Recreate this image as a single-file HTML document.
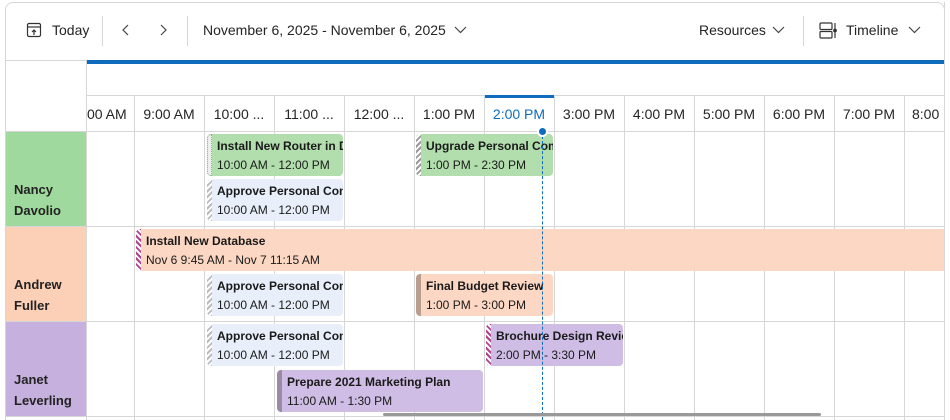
<!DOCTYPE html><html><head><style>
*{box-sizing:border-box;margin:0;padding:0}
body{width:950px;height:420px;background:#fff;font-family:"Liberation Sans",sans-serif;color:#242424;position:relative;overflow:hidden}
.abs{position:absolute}
.frame{left:5px;top:2px;width:940px;height:418px;border:1px solid #d6d6d6;border-radius:8px 8px 0 0;border-bottom:none}
.tb{font-size:14px;top:22px}
.sep{width:1px;height:30px;background:#d6d6d6;top:16px}
.vl{width:1px;background:#d6d6d6}
.hl{height:1px;background:#d6d6d6}
.th{top:106px;font-size:14px;width:70px;text-align:center}
.res{left:6px;width:80px;font-size:13px;font-weight:bold;padding-left:8px;line-height:21px;color:#222}
.ev{border-radius:4px;padding:5px 0 0 10px;font-size:12px;line-height:20px;overflow:hidden;white-space:nowrap;color:#1a1a1a}
.ev b{display:block;line-height:14px;margin-bottom:2px}
.bar{position:absolute;left:0;top:0;bottom:0;width:5px;border-radius:4px 0 0 4px}
</style></head><body>
<div class="abs frame"></div>
<svg class="abs" style="left:26px;top:22px" width="16" height="16" viewBox="0 0 16 16" fill="none" stroke="#333" stroke-width="1.2"><rect x="1.5" y="1.5" width="13" height="13" rx="1.5"/><line x1="1.5" y1="5" x2="14.5" y2="5"/><path d="M8 8v5M6 10l2-2 2 2"/></svg>
<div class="abs tb" style="left:52px">Today</div>
<div class="abs sep" style="left:102px"></div>
<svg class="abs" style="left:120px;top:24px" width="12" height="12" viewBox="0 0 12 12" fill="none" stroke="#444" stroke-width="1.2"><path d="M8 1L3 6l5 5"/></svg>
<svg class="abs" style="left:157px;top:24px" width="12" height="12" viewBox="0 0 12 12" fill="none" stroke="#444" stroke-width="1.2"><path d="M4 1l5 5-5 5"/></svg>
<div class="abs sep" style="left:187px"></div>
<div class="abs tb" style="left:203px">November 6, 2025 - November 6, 2025</div>
<svg class="abs" style="left:454px;top:26px" width="13" height="9" viewBox="0 0 13 9" fill="none" stroke="#444" stroke-width="1.2"><path d="M1 1l5.5 5.5L12 1"/></svg>
<div class="abs tb" style="left:699px">Resources</div>
<svg class="abs" style="left:772px;top:26px" width="13" height="9" viewBox="0 0 13 9" fill="none" stroke="#444" stroke-width="1.2"><path d="M1 1l5.5 5.5L12 1"/></svg>
<div class="abs sep" style="left:803px"></div>
<svg class="abs" style="left:819px;top:22px" width="18" height="17" viewBox="0 0 18 17" fill="none" stroke="#333" stroke-width="1.2"><rect x="1" y="1" width="12" height="6.5" rx="1"/><rect x="1" y="9.5" width="12" height="6.5" rx="1"/><line x1="16" y1="1" x2="16" y2="16"/><circle cx="16" cy="8.5" r="1.3" fill="#333"/></svg>
<div class="abs tb" style="left:846px">Timeline</div>
<svg class="abs" style="left:908px;top:26px" width="13" height="9" viewBox="0 0 13 9" fill="none" stroke="#444" stroke-width="1.2"><path d="M1 1l5.5 5.5L12 1"/></svg>

<div class="abs hl" style="left:6px;top:60px;width:938px"></div>
<div class="abs" style="left:86px;top:60px;width:858px;height:4px;background:#0f6cbd"></div>
<div class="abs hl" style="left:86px;top:95px;width:858px"></div>
<div class="abs hl" style="left:6px;top:131px;width:938px"></div>
<div class="abs hl" style="left:6px;top:226px;width:938px"></div>
<div class="abs hl" style="left:6px;top:321px;width:938px"></div>
<div class="abs hl" style="left:6px;top:416px;width:938px"></div>
<div class="abs vl" style="left:86px;top:60px;height:360px"></div>
<div class="abs vl" style="left:134px;top:95px;height:325px"></div>
<div class="abs vl" style="left:204px;top:95px;height:325px"></div>
<div class="abs vl" style="left:274px;top:95px;height:325px"></div>
<div class="abs vl" style="left:344px;top:95px;height:325px"></div>
<div class="abs vl" style="left:414px;top:95px;height:325px"></div>
<div class="abs vl" style="left:484px;top:95px;height:325px"></div>
<div class="abs vl" style="left:554px;top:95px;height:325px"></div>
<div class="abs vl" style="left:624px;top:95px;height:325px"></div>
<div class="abs vl" style="left:694px;top:95px;height:325px"></div>
<div class="abs vl" style="left:764px;top:95px;height:325px"></div>
<div class="abs vl" style="left:834px;top:95px;height:325px"></div>
<div class="abs vl" style="left:904px;top:95px;height:325px"></div>

<div class="abs" style="left:87px;top:96px;width:47px;height:35px;overflow:hidden"><div class="abs th" style="left:-21px;top:10px">8:00 AM</div></div>
<div class="abs th" style="left:134px">9:00 AM</div>
<div class="abs th" style="left:204px">10:00 ...</div>
<div class="abs th" style="left:274px">11:00 ...</div>
<div class="abs th" style="left:344px">12:00 ...</div>
<div class="abs th" style="left:414px">1:00 PM</div>
<div class="abs" style="left:485px;top:95px;width:69px;height:3px;background:#0f6cbd"></div>
<div class="abs th" style="left:484px;color:#0f6cbd">2:00 PM</div>
<div class="abs th" style="left:554px">3:00 PM</div>
<div class="abs th" style="left:624px">4:00 PM</div>
<div class="abs th" style="left:694px">5:00 PM</div>
<div class="abs th" style="left:764px">6:00 PM</div>
<div class="abs th" style="left:834px">7:00 PM</div>
<div class="abs th" style="left:904px;text-align:left;padding-left:8px;white-space:nowrap">8:00 PM</div>

<div class="abs res" style="top:132px;height:94px;background:#a0d99d;padding-top:47px">Nancy<br>Davolio</div>
<div class="abs res" style="top:227px;height:94px;background:#fcd0b6;padding-top:47px">Andrew<br>Fuller</div>
<div class="abs res" style="top:322px;height:94px;background:#c6b0dd;padding-top:47px">Janet<br>Leverling</div>

<div class="abs ev" style="left:207px;top:134px;width:136px;height:42px;background:#b1deac"><span class="bar" style="background:#eee;border:1px dotted #8a8"></span><b>Install New Router in D</b>10:00 AM - 12:00 PM</div>
<div class="abs ev" style="left:207px;top:179px;width:136px;height:42px;background:#e8effa"><span class="bar" style="background:repeating-linear-gradient(135deg,#bbb 0 2px,#fff 2px 4px)"></span><b>Approve Personal Com</b>10:00 AM - 12:00 PM</div>
<div class="abs ev" style="left:416px;top:134px;width:137px;height:42px;background:#b1deac"><span class="bar" style="background:repeating-linear-gradient(135deg,#999 0 2px,#fff 2px 4px)"></span><b>Upgrade Personal Com</b>1:00 PM - 2:30 PM</div>
<div class="abs ev" style="left:136px;top:229px;width:808px;height:42px;background:#fcd7c3;border-radius:4px 0 0 4px"><span class="bar" style="background:repeating-linear-gradient(45deg,#b04090 0 2px,#fff 2px 4px)"></span><b>Install New Database</b>Nov 6 9:45 AM - Nov 7 11:15 AM</div>
<div class="abs ev" style="left:207px;top:274px;width:136px;height:42px;background:#e8effa"><span class="bar" style="background:repeating-linear-gradient(135deg,#bbb 0 2px,#fff 2px 4px)"></span><b>Approve Personal Com</b>10:00 AM - 12:00 PM</div>
<div class="abs ev" style="left:416px;top:274px;width:137px;height:42px;background:#fcd7c3"><span class="bar" style="background:#b89e8e"></span><b>Final Budget Review</b>1:00 PM - 3:00 PM</div>
<div class="abs ev" style="left:207px;top:324px;width:136px;height:42px;background:#e8effa"><span class="bar" style="background:repeating-linear-gradient(135deg,#bbb 0 2px,#fff 2px 4px)"></span><b>Approve Personal Com</b>10:00 AM - 12:00 PM</div>
<div class="abs ev" style="left:486px;top:324px;width:137px;height:42px;background:#cfbde5"><span class="bar" style="background:repeating-linear-gradient(45deg,#b04090 0 2px,#fff 2px 4px)"></span><b>Brochure Design Revie</b>2:00 PM - 3:30 PM</div>
<div class="abs ev" style="left:277px;top:370px;width:206px;height:42px;background:#cfbde5"><span class="bar" style="background:#9a8aa6"></span><b>Prepare 2021 Marketing Plan</b>11:00 AM - 1:30 PM</div>

<div class="abs" style="left:944px;top:60px;width:6px;height:360px;background:#fff"></div>
<div class="abs vl" style="left:944px;top:2px;height:418px"></div>
<div class="abs" style="left:542px;top:131px;height:289px;border-left:1px dashed #0f6cbd"></div>
<div class="abs" style="left:537px;top:126px;width:11px;height:11px;border-radius:50%;background:#0f6cbd;border:2px solid #fff"></div>
<div class="abs" style="left:383px;top:413px;width:438px;height:3px;background:#999;border-radius:2px"></div>
</body></html>
